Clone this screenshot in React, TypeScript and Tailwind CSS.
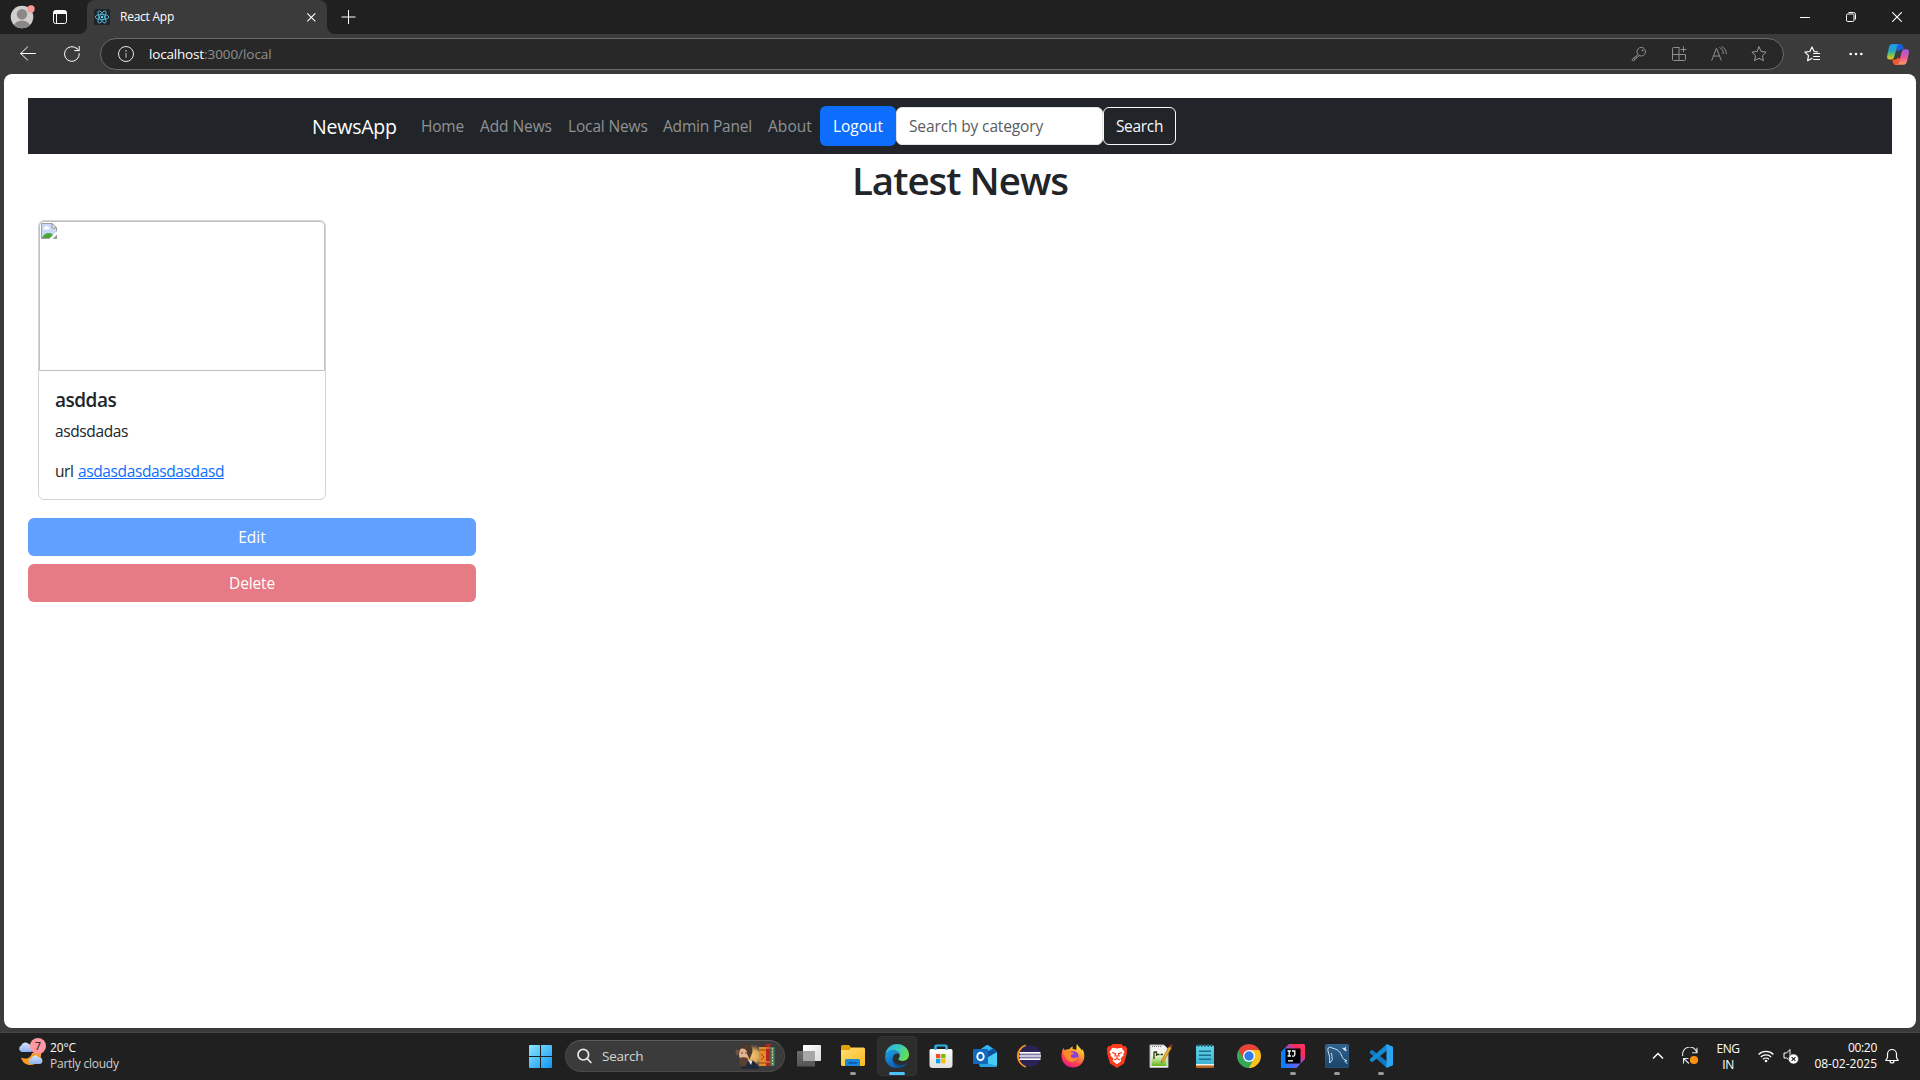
import React from "react";

type Kids = { children: React.ReactNode };

/* ---------- Title bar ---------- */

function Avatar() {
  return (
    <svg width="26" height="26" viewBox="0 0 26 26">
      <clipPath id="av"><circle cx="12" cy="13" r="11.3" /></clipPath>
      <circle cx="12" cy="13" r="11.3" fill="#d0cfcd" />
      <g clipPath="url(#av)" fill="#8a8886">
        <circle cx="12" cy="10.2" r="5.2" />
        <ellipse cx="12" cy="22" rx="8" ry="5.4" />
      </g>
      <circle cx="21" cy="5" r="3.7" fill="#f99a97" />
    </svg>
  );
}

function ReactLogo() {
  return (
    <svg width="16" height="16" viewBox="0 0 16 16" fill="none" stroke="#53c1de" strokeWidth=".85">
      <rect width="16" height="16" rx="1.5" fill="#20232a" stroke="none" />
      <ellipse cx="8" cy="8" rx="6.8" ry="2.6" />
      <ellipse cx="8" cy="8" rx="6.8" ry="2.6" transform="rotate(60 8 8)" />
      <ellipse cx="8" cy="8" rx="6.8" ry="2.6" transform="rotate(120 8 8)" />
      <circle cx="8" cy="8" r="1.2" fill="#61dafb" stroke="none" />
    </svg>
  );
}

function TitleBar() {
  return (
    <div className="flex h-[34px] bg-[#3b3b3b]">
      <div className="flex w-[87px] items-center rounded-br-lg bg-[#202020] pl-[10px]">
        <Avatar />
        <svg className="ml-[17px]" width="14" height="14" viewBox="0 0 14 14">
          <rect x=".5" y=".5" width="13" height="13" rx="2" fill="none" stroke="#fff" />
          <path d="M.5 4V2.5a2 2 0 0 1 2-2h9a2 2 0 0 1 2 2V4z" fill="#fff" />
          <path d="M3.500 4v9.500" stroke="#fff" />
        </svg>
      </div>
      <div className="w-60 bg-[#202020]">
        <div className="flex h-full items-center rounded-t-lg bg-[#3b3b3b] pl-[7px] pr-[11px]">
          <ReactLogo />
          <span className="ml-[10px] w-[60px] whitespace-nowrap text-[12px] leading-4 tracking-[-0.25px] text-white">React App</span>
          <svg className="ml-auto" width="10" height="10" viewBox="0 0 10 10" stroke="#fff" strokeWidth="1.1"><path d="M1.300 1.300l8 8M9.300 1.300l-8 8" /></svg>
        </div>
      </div>
      <div className="flex flex-1 items-center rounded-bl-lg bg-[#202020] pl-[14px] pr-[18px]">
        <svg width="15" height="15" viewBox="0 0 15 15" stroke="#fff" strokeWidth="1"><path d="M.5 7h14M7.500 0v14" /></svg>
        <div className="ml-auto flex items-center gap-9">
          <svg width="10" height="10" viewBox="0 0 10 10" stroke="#fff"><path d="M0 5.500h10" /></svg>
          <svg width="10" height="10" viewBox="0 0 10 10" fill="none" stroke="#fff"><rect x=".5" y="2" width="7.500" height="7.500" rx="1.300" /><path d="M2.500 .5h5a2 2 0 0 1 2 2v5" /></svg>
          <svg width="10" height="10" viewBox="0 0 10 10" stroke="#fff" strokeWidth="1.1"><path d="M.2.2l9.600 9.600M9.800.2L.2 9.800" /></svg>
        </div>
      </div>
    </div>
  );
}

/* ---------- Toolbar ---------- */

function LineIcon({ children, color = "#8f8f8f" }: Kids & { color?: string }) {
  return (
    <svg width="16" height="16" viewBox="0 0 16 16" fill="none" stroke={color} strokeLinejoin="round" strokeLinecap="round" strokeWidth="1">
      {children}
    </svg>
  );
}

function Copilot() {
  return (
    <svg width="22" height="21" viewBox="0 0 22 21">
      <defs>
        <linearGradient id="cpA" x1="0" y1="0" x2="0" y2="1"><stop offset="0" stopColor="#1f9bf0" /><stop offset=".45" stopColor="#27a5c9" /><stop offset=".75" stopColor="#8cc53f" /><stop offset="1" stopColor="#f8c419" /></linearGradient>
        <linearGradient id="cpB" x1="0" y1="0" x2="0" y2="1"><stop offset="0" stopColor="#9b5cf0" /><stop offset=".5" stopColor="#e8559c" /><stop offset="1" stopColor="#ff9a5c" /></linearGradient>
      </defs>
      <path d="M11 0h2.500c1.500 0 2.200 1 2.600 2.400L17 5.500h-3c-1.400 0-2.200.8-2.600 2.200L9 6z" fill="#1b5fd6" />
      <path d="M11 21H8.500c-1.500 0-2.200-1-2.600-2.400L5.200 15.500h3c1.400 0 2.200-.8 2.600-2.200l2.200 1.700z" fill="#f2592f" />
      <path d="M5.500 0h6.800c-1.300.3-1.800 1.300-2.200 2.600L7.400 12.200c-.5 1.900-1.400 3.300-3.500 3.300H2.500C.7 15.500-.3 14 .1 12L2 3.200C2.500 1.200 3.500 0 5.500 0z" fill="url(#cpA)" />
      <path d="M16.500 20.800H9.700c1.300-.3 1.800-1.300 2.200-2.600l2.700-9.600c.5-1.900 1.400-3.300 3.500-3.300h1.400c1.800 0 2.800 1.500 2.400 3.500L20 17.600c-.5 2-1.500 3.200-3.500 3.200z" fill="url(#cpB)" />
    </svg>
  );
}

const STAR = "M8 .9l2.150 4.600 4.950.65-3.600 3.500.9 5L8 12.250 3.600 14.650l.9-5L.9 6.150l4.950-.65z";

function Toolbar() {
  return (
    <div className="flex h-10 items-center bg-[#3b3b3b] pl-5 pr-[11px]">
      <LineIcon color="#fff"><path d="M15.500 7.500H.7M7.500 1L.7 7.500l6.800 6.500" /></LineIcon>
      <div className="ml-7 flex">
        <LineIcon color="#fff"><path d="M15.300 7.600A7.400 7.400 0 1 1 12.900 2.500M15.200 .4v4.200h-4.400M12.600 2.200l2.400 2.300" /></LineIcon>
      </div>
      <div className="ml-5 flex h-8 flex-1 items-center rounded-full border border-[#6b6b6b] bg-[#282828] pl-[17px] pr-4">
        <svg width="16" height="16" viewBox="0 0 16 16"><circle cx="8" cy="8" r="7.500" fill="none" stroke="#e6e6e6" /><path d="M8 7v4.800" stroke="#a8a8a8" strokeWidth="1.200" /><circle cx="8" cy="4.800" r=".9" fill="#a8a8a8" /></svg>
        <div className="ml-[15px] flex text-[13.500px] leading-5">
          <span className="w-[55px] whitespace-nowrap tracking-[-0.18px] text-white">localhost</span>
          <span className="whitespace-nowrap tracking-[-0.06px] text-[#8f8f8f]">:3000/local</span>
        </div>
        <div className="ml-auto flex items-center gap-6">
          <LineIcon><circle cx="10.300" cy="5.700" r="4.300" /><path d="M7 8.700L1.200 13.200c-.4 1 .5 1.800 1.300 1.600l1-.5v-1.500h1.700v-1.700h1.600L8.300 9.600" /><circle cx="11.600" cy="4.400" r=".5" fill="#8f8f8f" /></LineIcon>
          <LineIcon><path d="M8 1.500H2.500a1 1 0 0 0-1 1V13.500a1 1 0 0 0 1 1H13.500a1 1 0 0 0 1-1V8.500H1.500M8 1.500V14.500M12.500 0.800v5M10 3.500h5" /></LineIcon>
          <LineIcon><path d="M.8 14.200L5.500 2.300l4.700 11.900M2.500 10h6M8.800 1.600a6 6 0 0 1 3.500 6M11 .6a8 8 0 0 1 4.300 7" /></LineIcon>
          <LineIcon color="#9a9a9a"><path d={STAR} /></LineIcon>
        </div>
      </div>
      <div className="ml-5 flex">
        <LineIcon color="#fff"><path d="M8.200 12.300L3.600 14.650l.9-5L.9 6.150l4.950-.65L8 .9l2.150 4.600 3.200.4M9.600 7.500h6.200M9.600 10.500h6.200M9.600 13.500h6.200" strokeWidth="1.150" /></LineIcon>
      </div>
      <svg className="ml-[29px]" width="14" height="4" viewBox="0 0 14 4" fill="#fff"><circle cx="1.700" cy="2" r="1.300" /><circle cx="7" cy="2" r="1.300" /><circle cx="12.300" cy="2" r="1.300" /></svg>
      <div className="ml-6"><Copilot /></div>
    </div>
  );
}

/* ---------- Page ---------- */

function BrokenImage() {
  return (
    <svg width="16" height="16" viewBox="0 0 16 16">
      <path d="M.5.5H11l4.500 4.500v10.500H.5z" fill="#c9daf8" stroke="#a0a0a0" />
      <path d="M11 .5V5h4.500z" fill="#fff" stroke="#8e8e8e" />
      <path d="M2.500 6.500a1.500 1.500 0 0 1 1.200-2.200 2 2 0 0 1 3.600-.2 1.400 1.400 0 0 1 .9 2.400z" fill="#fff" />
      <path d="M1 15c1-3 3.500-5 6.500-5 3 0 5.500 2 7.500 5z" fill="#4fa53a" />
      <path d="M8 16l8-8v4l-3.500 4z" fill="#fff" />
      <path d="M12.500 15.500l3-3.200v3.200z" fill="#7cc06a" stroke="#8e8e8e" strokeWidth=".6" />
    </svg>
  );
}

function NewsNav() {
  return (
    <nav className="flex h-14 items-center bg-[#212529] pl-[284px] text-[15.500px] leading-6 text-[#909294]">
      <span className="w-[93px] whitespace-nowrap pt-px text-[19.500px] leading-[30px] tracking-[-0.2px] text-white">NewsApp</span>
      <div className="ml-4 flex gap-4 whitespace-nowrap">
        <span className="w-[43px] tracking-[-0.2px]">Home</span>
        <span className="w-[72px] tracking-[-0.08px]">Add News</span>
        <span className="w-[79px] tracking-[-0.15px]">Local News</span>
        <span className="w-[89px] tracking-[-0.2px]">Admin Panel</span>
        <span className="w-[44px] tracking-[0.05px]">About</span>
      </div>
      <span className="ml-2 flex h-10 w-[76px] items-center justify-center rounded-md bg-[#0d6efd] text-white">Logout</span>
      <div className="flex h-[38px] w-[207px] items-center whitespace-nowrap rounded-md border border-[#dee2e6] bg-white px-3 tracking-[-0.13px] text-[#595c5f]">Search by category</div>
      <button className="flex h-[38px] w-[73px] items-center justify-center rounded-md border border-[#f8f9fa] tracking-[-0.32px] text-[#f8f9fa]">Search</button>
    </nav>
  );
}

function Page() {
  return (
    <main className="flex h-[954px] flex-col rounded-lg bg-white px-6 pt-6 text-[#212529]">
      <NewsNav />
      <h1 className="h-14 pt-px text-center text-[38.500px] font-semibold leading-[50px] tracking-[-1px]">Latest News</h1>
      <article className="m-[10px] h-[280px] w-72 rounded-md border border-[#d3d4d5]">
        <div className="h-[150px] rounded-t-[5px] border border-[#c0c0c0] p-px"><BrokenImage /></div>
        <div className="p-4 text-[15.500px] leading-6">
          <h5 className="h-8 pt-px text-[19px] font-semibold leading-6 tracking-[-0.5px]">asddas</h5>
          <p className="mb-4 tracking-[-0.38px]">asdsdadas</p>
          <p className="flex">
            <span className="w-[23px] tracking-[-0.4px]">url</span>
            <a className="tracking-[-0.38px] text-[#0d6efd] underline">asdasdasdasdasdasd</a>
          </p>
        </div>
      </article>
      <div className="mt-2 flex w-[448px] flex-col gap-2 text-[15.500px] leading-6 text-white">
        <button className="h-[38px] rounded-md bg-[#61a0fe]">Edit</button>
        <button className="h-[38px] rounded-md bg-[#e77b85] tracking-[-0.15px]">Delete</button>
      </div>
    </main>
  );
}

/* ---------- Taskbar ---------- */

function Weather() {
  return (
    <svg width="28" height="28" viewBox="0 0 28 28">
      <defs><linearGradient id="cl" x1="0" y1="0" x2="0" y2="1"><stop offset="0" stopColor="#d3e3fb" /><stop offset="1" stopColor="#8fb2ee" /></linearGradient></defs>
      <path d="M3 19.500C5 28 15 29 20 24c3-3 3.500-8 3-10l-9 1c-1 5-6 7-11 4.500z" fill="#f59a23" />
      <path d="M3.500 14a3.500 3.500 0 0 1-.3-6.500A4.500 4.500 0 0 1 11 6.200a4 4 0 0 1 1.500 7.800z" fill="url(#cl)" />
      <path d="M13.500 26a2.800 2.800 0 0 1 0-5.600 3.800 3.800 0 0 1 7-1.200 3.500 3.500 0 0 1 1.500 6.800z" fill="url(#cl)" />
      <circle cx="20" cy="8" r="8" fill="#fe99a4" />
      <text x="20" y="12" textAnchor="middle" fontSize="11" fill="#111" fontFamily="Open Sans">7</text>
    </svg>
  );
}

function Scene() {
  return (
    <svg width="40" height="25" viewBox="0 0 40 25">
      <defs><radialGradient id="glow"><stop offset="0" stopColor="#f0c070" /><stop offset=".5" stopColor="#d9a75c" /><stop offset="1" stopColor="#8d6a3c" stopOpacity="0" /></radialGradient></defs>
      <ellipse cx="18" cy="12" rx="12" ry="12" fill="url(#glow)" />
      <path d="M6 25c2-6 5-9 10-9 4 1 7 5 8 9z" fill="#20283c" />
      <path d="M13 16l3 5 1.500-4.500z" fill="#e9e4dc" />
      <ellipse cx="9" cy="10" rx="5" ry="7" fill="#e2b48d" />
      <path d="M3.500 4.500C4 1.500 7-.2 11 .2c5 .3 7.500 4 6 9l-2.500 6-2.500-5.500C12.500 6 9 3.500 5 5z" fill="#4c382c" />
      <path d="M1 5.500C0 8 .5 11 3 12L4.500 6z" fill="#6b5243" />
      <path d="M4.500 14.500c2-1.500 5-1.500 8-.5 1 4-1 8.500-4 8.500s-5-4-4-8z" fill="#5a4130" />
      <path d="M6 9h2M10 9h2" stroke="#3c2a20" strokeWidth=".8" />
      <rect x="24" y="3" width="7" height="19" fill="#e48a2a" /><path d="M24 6h7M24 19h7M26 10l3 3-3 3" stroke="#8a4c10" fill="none" />
      <rect x="31" y="0" width="4.500" height="22" fill="#b8261f" /><path d="M31 4h4.500M31 18h4.500" stroke="#e9a33a" />
      <rect x="35.500" y="3" width="4" height="19" fill="#3a8a78" /><path d="M37.500 4v17" stroke="#e5d58a" strokeDasharray="1.500 1.500" />
    </svg>
  );
}

function S({ children }: Kids) {
  return <svg width="24" height="24" viewBox="0 0 24 24">{children}</svg>;
}

const TaskView = () => (
  <S>
    <defs><linearGradient id="tv" x1="0" y1="0" x2="1" y2="1"><stop offset="0" stopColor="#fff" /><stop offset="1" stopColor="#dcdcdc" /></linearGradient><linearGradient id="tv2" x1="0" y1="0" x2="0" y2="1"><stop offset="0" stopColor="#6c6c6c" /><stop offset="1" stopColor="#555" /></linearGradient></defs>
    <rect x="0" y="7" width="18" height="15.500" rx=".8" fill="url(#tv2)" />
    <rect x="6" y="1" width="18" height="16" rx=".8" fill="url(#tv)" />
    <rect x="6" y="7" width="12" height="10" fill="#a6a6a6" />
  </S>
);

const Explorer = () => (
  <S>
    <defs><linearGradient id="fx" x1="0" y1="0" x2="1" y2="1"><stop offset="0" stopColor="#ffdd73" /><stop offset="1" stopColor="#fdbb1e" /></linearGradient></defs>
    <path d="M0 2.500A1.500 1.500 0 0 1 1.500 1H8l2 2.500V9H0z" fill="#e2a006" />
    <path d="M0 6h8l2.500-2.500H22.500A1.500 1.500 0 0 1 24 5v15.500A1.500 1.500 0 0 1 22.500 22H1.500A1.500 1.500 0 0 1 0 20.500z" fill="url(#fx)" />
    <path d="M4 22v-5.500A1.500 1.500 0 0 1 5.500 15h12a1.500 1.500 0 0 1 1.500 1.500V22z" fill="#1a86d9" />
    <rect x="7.500" y="18" width="8.500" height="1.800" rx=".9" fill="#0b5aa5" />
  </S>
);

const Edge = () => (
  <S>
    <defs>
      <linearGradient id="e1" x1="0" y1=".2" x2="1" y2=".5"><stop offset="0" stopColor="#2fb3ea" /><stop offset=".5" stopColor="#36c6c6" /><stop offset="1" stopColor="#6ae04a" /></linearGradient>
      <linearGradient id="e2" x1="0" y1="0" x2=".4" y2="1"><stop offset="0" stopColor="#1ca0e8" /><stop offset="1" stopColor="#0f62b4" /></linearGradient>
    </defs>
    <path d="M.3 10.500C1 4.500 6 0 12 0c7 0 12 5 12 10.600 0 4-3 6.400-6.600 6.400-2.700 0-4-1-4-1.900 0-.7 1.400-1.200 1.400-3.500C14.800 8.500 12 6.500 8 6.500c-3.500 0-6.300 1.700-7.700 4z" fill="url(#e1)" />
    <path d="M.1 12.500C.5 9 3.500 6.500 8 6.500c3.500 0 6 1.500 6.700 4-1-.8-2.200-1.200-3.300-1-3 .6-4.400 4-3.400 7.500 1 3.500 4 6 7 6.600-8 2-15.200-3.800-14.900-11.100z" fill="url(#e2)" />
    <path d="M8.300 12.500c-1 5 3 9 8 8.700 2.500-.2 4.200-1.200 5.200-1.900.4-.2.800.2.500.6A12 12 0 0 1 14 23.800C9 23 6 17 8.300 12.500z" fill="#0d4f93" />
  </S>
);

const Store = () => (
  <S>
    <defs><linearGradient id="st" x1="0" y1="0" x2="0" y2="1"><stop offset="0" stopColor="#fff" /><stop offset="1" stopColor="#dedede" /></linearGradient></defs>
    <path d="M6.500 7V2.500A1 1 0 0 1 7.500 1.500h9a1 1 0 0 1 1 1V7" fill="none" stroke="#2eb0ea" strokeWidth="2" />
    <path d="M.5 6.500A1.500 1.500 0 0 1 2 5h20a1.500 1.500 0 0 1 1.500 1.500V21a3 3 0 0 1-3 3h-17a3 3 0 0 1-3-3z" fill="url(#st)" />
    <path d="M6.500 1.500V6M17.500 1.500V6" stroke="#2eb0ea" strokeWidth="2" />
    <rect x="7" y="10" width="4.300" height="4.300" fill="#f25022" /><rect x="12.200" y="10" width="4.300" height="4.300" fill="#7fba00" /><rect x="7" y="15" width="4.300" height="4.300" fill="#00a4ef" /><rect x="12.200" y="15" width="4.300" height="4.300" fill="#ffb900" />
  </S>
);

const Outlook = () => (
  <S>
    <path d="M6 6l7.500-4.700a1.500 1.500 0 0 1 1.600 0L23.500 7v4L14 16 6 10z" fill="#1579c8" />
    <path d="M8 9l12-5.200 3.500 3.200v3L14 16z" fill="#0f4f9c" />
    <path d="M12 2.300l1.500-1a1.500 1.500 0 0 1 1.600 0L20 4.400 8 11V5z" fill="#33b5ec" />
    <path d="M24 8v13a2 2 0 0 1-2 2H8.500a2 2 0 0 1-2-2v-3z" fill="#45cdf5" />
    <path d="M6.500 17L24 22a2 2 0 0 1-2 1H8.500a2 2 0 0 1-2-2z" fill="#2aa3e6" />
    <rect x="0" y="5" width="15" height="15" rx="1.300" fill="#1068bf" />
    <ellipse cx="7.500" cy="12.500" rx="3.200" ry="3.700" fill="none" stroke="#fff" strokeWidth="1.900" />
  </S>
);

const Eclipse = () => (
  <S>
    <path d="M9 1.500A11 11 0 0 0 9 22.700" fill="none" stroke="#f1922a" strokeWidth="2" />
    <circle cx="13" cy="12" r="10.800" fill="#2c2255" />
    <path d="M2.500 8.800h21M2.200 12h22M2.500 15.200h21" stroke="#fff" strokeWidth="1.700" />
    <path d="M3 10.400h21M3 13.600h21" stroke="#8f88b5" strokeWidth="1" />
  </S>
);

const Firefox = () => (
  <S>
    <defs><linearGradient id="ff" x1=".8" y1="0" x2=".3" y2="1"><stop offset="0" stopColor="#fff04a" /><stop offset=".35" stopColor="#ffa52b" /><stop offset=".7" stopColor="#ff4a4a" /><stop offset="1" stopColor="#e31587" /></linearGradient></defs>
    <path d="M2.500 4c.3 1 .8 1.600 1.400 2.200C5 5.200 7 5 8.500 5.200 9.500 3.500 11 2.500 12 2.500c-.6 1-.7 2 0 2.500 1.500.6 2.500.4 3 1C16 4 15 2 16 0c1 2.500 3.500 4 5 6.500l.5-1.300c1.500 2.300 2 5 1.800 7.600C23 19 18 23.500 12 23.500S.8 19 .6 12.800C.5 9 1 6.500 2.500 4z" fill="url(#ff)" />
    <circle cx="12" cy="12.500" r="5.600" fill="#8b3fe0" />
    <path d="M2 8c3-2 6.500-1.500 8.500.5l2.500.3c-.2 1.700-2.500 1.700-3 2.200-.7.800 0 3 2.500 3s3-1.500 5-.5c-1.500 4-6 5.500-9.500 3.500C4.500 15 4 12 2 8z" fill="#ff8a2a" />
  </S>
);

const Brave = () => (
  <S>
    <path d="M7.500 0h9l2 2.300 2-.4L22.300 5l-.7 2 .4 2-3 10.500L12 24l-7-4.500L2 9l.4-2-.7-2 1.800-3.100 2 .4z" fill="#fb3b1e" />
    <path d="M12 4.500l4.500-.8 3 4.300-1.200 1.800.2 1.700-3 3 .8 2.500-4.300 3.200-4.300-3.200.8-2.500-3-3 .2-1.700L4.500 8l3-4.300z" fill="#fff" />
    <path d="M7 8.500l3.500 1.200-.7 3M17 8.500l-3.500 1.200.7 3M9.200 15.800L12 14.500l2.800 1.300M12 14.500V11" stroke="#fb3b1e" strokeWidth="1.300" fill="none" />
  </S>
);

const NotepadPP = () => (
  <S>
    <defs><linearGradient id="np" x1="0" y1="0" x2="0" y2="1"><stop offset="0" stopColor="#f6f6f6" /><stop offset=".35" stopColor="#eef7d5" /><stop offset="1" stopColor="#62b51c" /></linearGradient></defs>
    <path d="M1 1h14l4 4v18.500H1z" fill="#f2f2f2" stroke="#b5b5b5" />
    <rect x="2.500" y="6" width="15" height="16" fill="url(#np)" />
    <path d="M3 2.500h9" stroke="#777" strokeDasharray="1 1" />
    <path d="M5 15V7.500M5 8h2.500v4M8 10.500h2.500M11.500 10.500h2.500" stroke="#2e3d1c" strokeWidth="1.300" fill="none" />
    <path d="M12 19l1-3.500L20 2.500l2.500 1.300L15 17z" fill="#f0b02c" stroke="#8a5a14" strokeWidth=".6" />
    <path d="M20 2.500L21.300.3l2.400 1.200-1.200 2.300z" fill="#a12c28" />
  </S>
);

const Notepad = () => (
  <S>
    <defs><linearGradient id="no" x1="0" y1="0" x2="0" y2="1"><stop offset="0" stopColor="#64d3e6" /><stop offset="1" stopColor="#3eb4d3" /></linearGradient></defs>
    <rect x="3" y="19" width="18" height="5" rx="1" fill="#b8661b" /><rect x="3" y="19" width="18" height="2.500" fill="#f1f1f1" />
    <path d="M3 2.500A1 1 0 0 1 4 1.500h16a1 1 0 0 1 1 1V20H3z" fill="url(#no)" />
    <path d="M5.500 0v3M8.700 0v3M12 0v3M15.300 0v3M18.500 0v3" stroke="#16607c" strokeWidth="1.300" />
    <path d="M6 7.300h12M6 11.300h12M6 15.300h12" stroke="#16708f" strokeWidth="1.600" />
  </S>
);

const Chrome = () => (
  <S>
    <path d="M12 12L1.610 6A12 12 0 0 1 22.390 6z" fill="#e94335" />
    <path d="M12 12L22.390 6A12 12 0 0 1 12 24z" fill="#fcc31e" />
    <path d="M12 12V24A12 12 0 0 1 1.610 6z" fill="#35a853" />
    <path d="M12 6H22.390L17.200 15z" fill="#fcc31e" /><path d="M17.200 15L12 24 9 13z" fill="#35a853" /><path d="M17.200 15L12 24H13.500L22 12.500z" fill="#fcc31e" /><path d="M6.800 15L1.610 6 12 6z" fill="#e94335" />
    <circle cx="12" cy="12" r="6" fill="#fff" /><circle cx="12" cy="12" r="4.700" fill="#2f7de9" />
  </S>
);

const IntelliJ = () => (
  <S>
    <defs><linearGradient id="ij" x1="0" y1="1" x2="1" y2="0"><stop offset="0" stopColor="#0a7dff" /><stop offset=".5" stopColor="#7b5cf0" /><stop offset=".75" stopColor="#fe2857" /><stop offset="1" stopColor="#ff3c6c" /></linearGradient></defs>
    <path d="M8 0h14.500A1.500 1.500 0 0 1 24 1.500V15L15.500 24H1.500A1.500 1.500 0 0 1 0 22.500V8z" fill="url(#ij)" />
    <path d="M0 8l5-4.500V24H1.500A1.500 1.500 0 0 1 0 22.500z" fill="#0a80ff" />
    <rect x="4.500" y="4.500" width="15" height="15" fill="#000" />
    <path d="M6.500 7h3.400M8.200 7v5M6.500 12h3.400M11 7h2.800v3.700c0 1-.6 1.500-1.500 1.500H11M7 16.800h5" stroke="#fff" strokeWidth="1.300" fill="none" />
  </S>
);

const MySQL = () => (
  <S>
    <defs><linearGradient id="my" x1="0" y1="0" x2="0" y2="1"><stop offset="0" stopColor="#2f6390" /><stop offset="1" stopColor="#1a4468" /></linearGradient></defs>
    <rect x="0" y="0" width="24" height="24" rx="3" fill="url(#my)" stroke="#3f6f96" strokeWidth=".5" />
    <path d="M7.500 15.500L4.700 19C4.500 16 5 13.500 4.200 11 3.400 8.200 2.300 6 3.200 4c1.200-1.400 3.300-.8 4.800.4 4 .4 7.500 3.600 9 8 .5 1.700 1.500 2.800 3 3.400l2 1-2.200.3 2.200 2.600M7.500 15.500c-1-2 0-4-1.300-6.500" fill="none" stroke="#d5e3ee" strokeWidth="1" />
    <path d="M16.500 3.500l2.500.8 2-1.800-.3 3 1.600 1.500-2.500-.2z" fill="#e6eef5" />
  </S>
);

const VSCode = () => (
  <S>
    <path d="M1 7.200L3 5.700 18 17.500V24L.8 9z" fill="#0f7ac4" />
    <path d="M1 16.800l2 1.500L18 6.500V0L.8 15z" fill="#1489d4" />
    <path d="M17.500 0L24 2.800v18.400L17.500 24z" fill="#2aa6f2" />
  </S>
);

type TaskApp = { name: string; Icon: () => React.ReactElement; running?: boolean; active?: boolean };

const apps: TaskApp[] = [
  { name: "Task View", Icon: TaskView },
  { name: "File Explorer", Icon: Explorer, running: true },
  { name: "Edge", Icon: Edge, active: true },
  { name: "Store", Icon: Store },
  { name: "Outlook", Icon: Outlook },
  { name: "Eclipse", Icon: Eclipse },
  { name: "Firefox", Icon: Firefox },
  { name: "Brave", Icon: Brave },
  { name: "Notepad++", Icon: NotepadPP },
  { name: "Notepad", Icon: Notepad },
  { name: "Chrome", Icon: Chrome },
  { name: "IntelliJ IDEA", Icon: IntelliJ, running: true },
  { name: "MySQL Workbench", Icon: MySQL, running: true },
  { name: "VS Code", Icon: VSCode, running: true },
];

function AppButton({ app }: { app: TaskApp }) {
  const { Icon } = app;
  return (
    <div className="flex w-11 justify-center">
      <div className={app.active ? "flex h-10 w-10 flex-col items-center rounded-[4px] border border-[#343434] bg-[#2d2d2d] pt-[7px]" : "flex h-10 w-10 flex-col items-center pt-2"}>
        <Icon />
        {app.active && <span className="mt-1 h-[3px] w-4 rounded-full bg-[#4cc2ff]" />}
        {app.running && <span className="mt-1 h-[3px] w-1.5 rounded-full bg-[#9a9a9a]" />}
      </div>
    </div>
  );
}

function Tray() {
  return (
    <div className="flex items-center pr-[21px] text-white">
      <svg width="12" height="8" viewBox="0 0 12 8" fill="none" stroke="#fff" strokeWidth="1.500"><path d="M1 6.500l5-5 5 5" /></svg>
      <svg className="ml-[18px]" width="17" height="18" viewBox="0 0 17 18" fill="none" stroke="#e8e8e8" strokeWidth="1.100">
        <path d="M.8 9A7 7 0 0 1 14.800 5.500M15 .8v4.900h-5M1.500 16.500v-5h5M1.500 11.500l5.500 5" />
        <circle cx="12" cy="13" r="4.100" fill="#ff9310" stroke="none" />
      </svg>
      <div className="ml-[13px] w-8 pt-px text-center text-[12px] leading-4 tracking-[-0.4px]"><div>ENG</div><div>IN</div></div>
      <svg className="ml-[14px]" width="16" height="14" viewBox="0 0 16 14" fill="none" stroke="#fff" strokeWidth="1.200"><path d="M.6 5.500a10.500 10.500 0 0 1 14.800 0M2.800 8a7.400 7.400 0 0 1 10.400 0M5 10.300a4.300 4.300 0 0 1 6 0" /><circle cx="8" cy="12" r="1.300" fill="#fff" stroke="none" /></svg>
      <svg className="ml-[9px]" width="16" height="16" viewBox="0 0 16 16">
        <path d="M1 5h2.500L7 1.500v11L3.500 10H1z" fill="none" stroke="#fff" strokeLinejoin="round" />
        <circle cx="10.500" cy="11" r="5" fill="#fff" stroke="#202020" strokeWidth=".5" /><path d="M8.600 9.100l3.800 3.800M12.400 9.100l-3.800 3.800" stroke="#202020" strokeWidth="1.100" />
      </svg>
      <div className="ml-3 w-[66px] whitespace-nowrap text-right text-[12px] leading-4"><div className="tracking-[-0.3px]">00:20</div><div>08-02-2025</div></div>
      <svg className="ml-2" width="14" height="16" viewBox="0 0 14 16" fill="none" stroke="#fff" strokeWidth="1.200" strokeLinejoin="round"><path d="M2.500 9.500V6a4.500 4.500 0 0 1 9 0v3.500l1.700 3H.8zM5 13a2 2 0 0 0 4 0" /></svg>
    </div>
  );
}

function Taskbar() {
  return (
    <div className="grid h-12 grid-cols-[529px_1fr_auto] items-center bg-[#202020] shadow-[inset_0_1px_0_#444]">
      <div className="flex items-start pl-[18px]">
        <div className="-mt-0.5"><Weather /></div>
        <div className="ml-1 text-[12px] leading-4"><div className="tracking-[-0.1px] text-white">20°C</div><div className="tracking-[-0.25px] text-[#cfcfcf]">Partly cloudy</div></div>
      </div>
      <div className="flex items-center">
        <svg className="mt-px" width="23" height="23" viewBox="0 0 23 23">
          <defs><linearGradient id="win" x1="0" y1="0" x2="1" y2="1"><stop offset="0" stopColor="#8be8ff" /><stop offset="1" stopColor="#0f94f5" /></linearGradient></defs>
          <path d="M0 1a1 1 0 0 1 1-1h10v11H0zM12 0h10a1 1 0 0 1 1 1v10H12zM0 12h11v11H1a1 1 0 0 1-1-1zM12 12h11v10a1 1 0 0 1-1 1H12z" fill="url(#win)" />
        </svg>
        <div className="ml-[13px] flex h-8 w-[220px] items-center rounded-full border border-[#4a4a4a] border-t-[#5c5c5c] bg-[#3b3b3b] pl-[11px] pr-[9px]">
          <svg width="15" height="16" viewBox="0 0 15 16" fill="none" stroke="#e8e8e8" strokeWidth="1.700" strokeLinecap="round"><circle cx="6.300" cy="6.700" r="5.300" /><path d="M10.200 10.700l3.700 3.800" /></svg>
          <span className="ml-[10px] whitespace-nowrap text-[13.500px] leading-5 tracking-[-0.25px] text-[#d6d6d6]">Search</span>
          <div className="ml-auto pt-px"><Scene /></div>
        </div>
        <div className="ml-[2px] flex">
          {apps.map((a) => <AppButton key={a.name} app={a} />)}
        </div>
      </div>
      <Tray />
    </div>
  );
}

export default function App() {
  return (
    <div className="flex h-[1080px] w-[1920px] flex-col overflow-hidden bg-[#3b3b3b] font-['Open_Sans',sans-serif]">
      <TitleBar />
      <Toolbar />
      <div className="h-[958px] px-1"><Page /></div>
      <Taskbar />
    </div>
  );
}
